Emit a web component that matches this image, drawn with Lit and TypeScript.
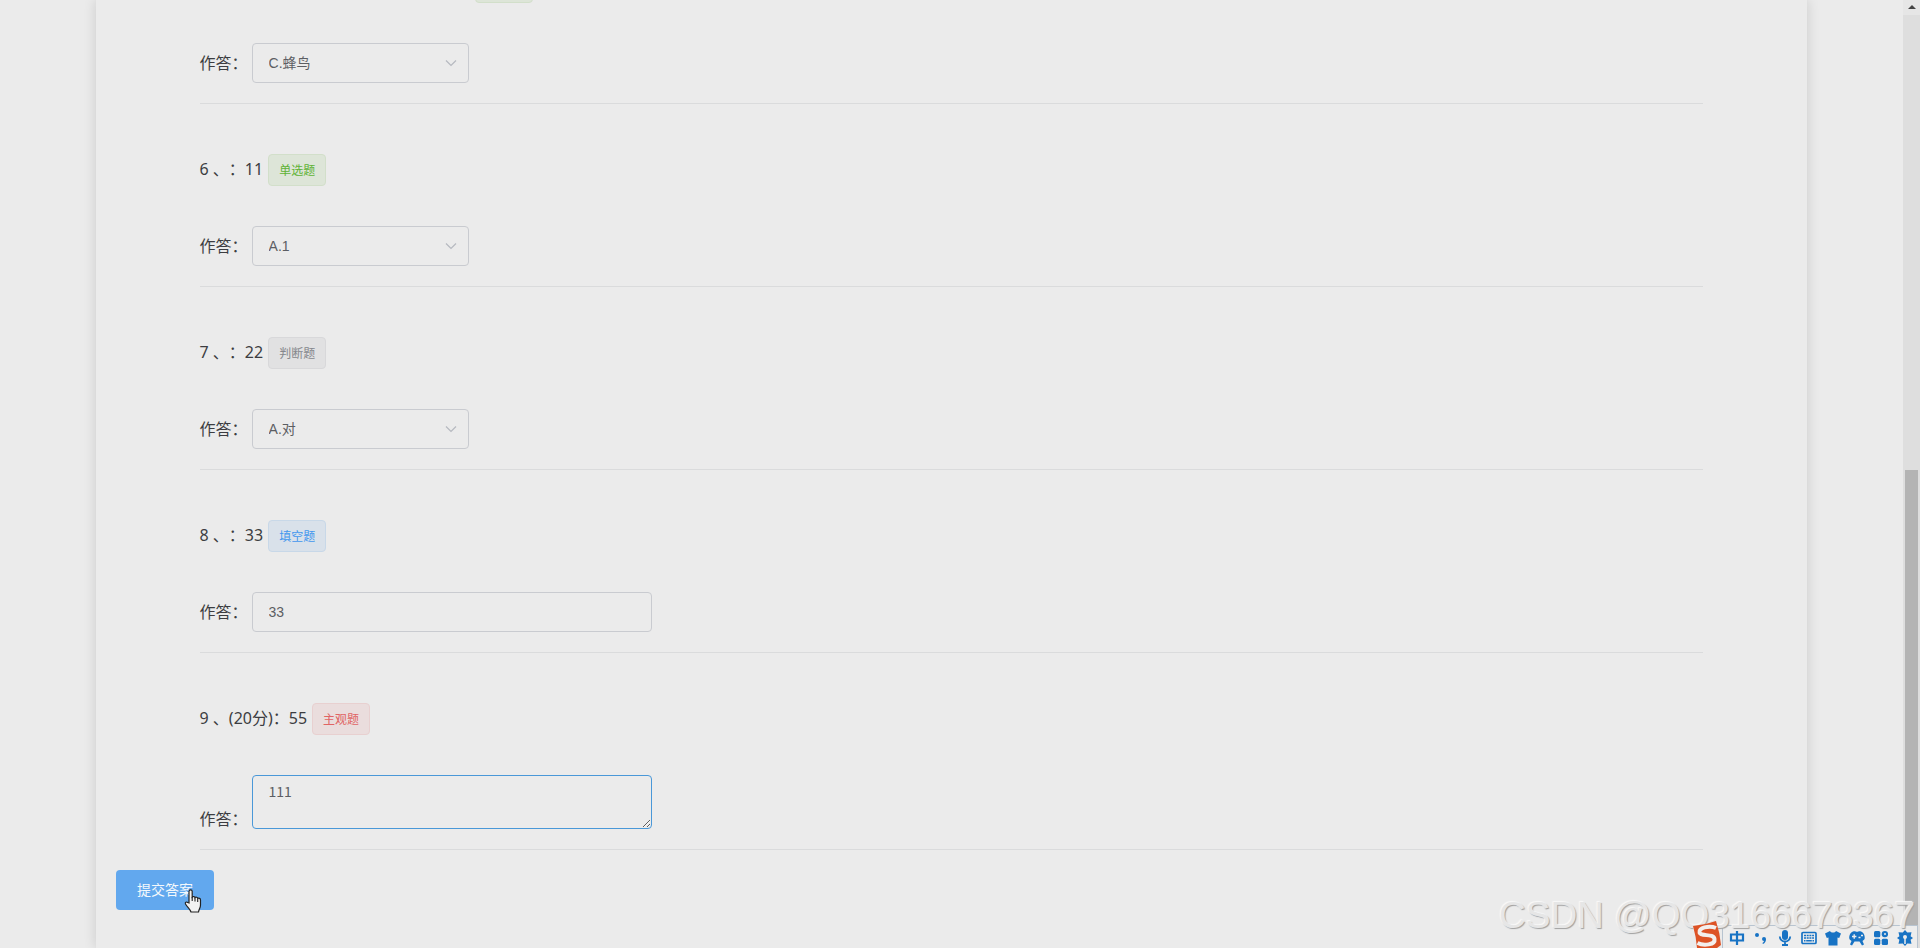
import { LitElement, html, css, svg } from "lit";
import { customElement } from "lit/decorators.js";

type Kind = "select" | "input" | "textarea";
interface Question {
  id: number;
  title: string;
  tag: string;
  tone: string;
  kind: Kind;
  value: string;
}

const questions: Question[] = [
  { id: 5, title: "", tag: "", tone: "success", kind: "select", value: "C.蜂鸟" },
  { id: 6, title: "6 、：11", tag: "单选题", tone: "success", kind: "select", value: "A.1" },
  { id: 7, title: "7 、：22", tag: "判断题", tone: "info", kind: "select", value: "A.对" },
  { id: 8, title: "8 、：33", tag: "填空题", tone: "primary", kind: "input", value: "33" },
  { id: 9, title: "9 、(20分)：55", tag: "主观题", tone: "danger", kind: "textarea", value: "111" },
];

const imeIcons = [
  svg`<path d="M2 4.500h12v6H2zM8 1v14" fill="none" stroke="currentColor" stroke-width="2.200"/>`,
  svg`<circle cx="4" cy="5" r="2"/><path d="M9 9a2 2 0 1 1 4 0c0 2.500-1 4-3 5l-.6-1c1-.6 1.500-1.200 1.600-2a2 2 0 0 1-2-2z"/>`,
  svg`<rect x="5" y="0" width="6" height="10" rx="3"/><path d="M2.800 6.500a5.200 5 0 0 0 10.400 0M8 12v3M5 15h6" fill="none" stroke="currentColor" stroke-width="1.800"/>`,
  svg`<rect x="1" y="2.500" width="14" height="11" rx="1" fill="none" stroke="currentColor" stroke-width="1.700"/><path d="M3 5.500h10M3 8h10" stroke="currentColor" stroke-width="1.500" stroke-dasharray="2 .7"/><path d="M3 10.800h1.500M5.200 10.800h5.600M11.500 10.800H13" stroke="currentColor" stroke-width="1.500"/>`,
  svg`<path d="M5 1c1 2 5 2 6 0l5 2.500-1.800 4.500-1.700-.6V15.500h-9V7.400L1.800 8 0 3.500z"/>`,
  svg`<path d="M4 1.500c2-.8 2.500.3 4 .3s2-1.100 4-.3c3 1 4 4.500 3.700 7-.4 1.500-1.500 1.800-2.200 2.500l1.500 3.500-2 1-2.500-4h-5L3 15.500l-2-1L2.500 11C1.800 10.300.7 10 .3 8.500 0 6 1 2.500 4 1.500z"/><path d="M3 6.500h4.400M5.200 4.300v4.400M9.500 7.500h2M12 5.500h2" stroke="#ededed" stroke-width="1.400"/>`,
  svg`<rect x="1" y="1" width="6.300" height="6.300" rx="1.500"/><rect x="8.700" y="1" width="6.300" height="6.300" rx="3"/><rect x="1" y="8.700" width="6.300" height="6.300" rx="1.500"/><rect x="8.700" y="8.700" width="6.300" height="6.300" rx="1.500"/><circle cx="12" cy="4" r="1" fill="#ededed"/>`,
  svg`<path d="M8 0l2.300 2.500 4.200-.2-.9 3.900L16 8l-2.400 1.800.9 3.900-4.200-.2L8 16l-2.300-2.500-4.200.2.900-3.900L0 8l2.400-1.800-.9-3.900 4.200.2z"/><circle cx="8" cy="7" r="2" fill="#ededed"/><path d="M8 8v6" stroke="#ededed" stroke-width="1.500"/>`,
];

@customElement("app-root")
export class AppRoot extends LitElement {
  static styles = css`
    :host {
      display: block;
      position: relative;
      height: 100vh;
      overflow: hidden;
      color: #3c3d41;
      background: #ebebeb;
      font: 16px/24px "Noto Sans", "Noto Sans CJK SC", sans-serif;
      text-spacing-trim: space-all;
    }
    * { box-sizing: border-box; }
    .frame { display: flex; height: 100%; }
    .page { flex: 1; min-width: 0; padding: 0 96px; }
    .panel {
      height: 100%;
      display: flex;
      flex-direction: column;
      justify-content: flex-end;
      padding: 0 20px 38px;
      box-shadow: 0 0 12px rgba(0, 0, 0, 0.14);
    }
    .list { padding: 0 5%; }
    .question { padding-bottom: 20px; border-bottom: 1px solid #dadbdc; margin-bottom: 50px; }
    .question:last-child { margin-bottom: 20px; }
    .head { display: flex; gap: 5px; height: 32px; margin-bottom: 40px; }
    .head h3 { margin: 0; font-size: 16px; font-weight: 400; line-height: 30px; white-space: pre; }
    .blank { width: 270px; }
    .tag { min-width: 58px; height: 32px; padding: 0 10px; border: 1px solid; border-radius: 4px; font-size: 12px; line-height: 32px; }
    .success { color: #5fb336; background: #dde5d8; border-color: #d2dfca; }
    .info { color: #85878c; background: #e1e1e2; border-color: #d8d8da; }
    .primary { color: #4297ee; background: #d9e1ea; border-color: #c8d8e8; }
    .danger { color: #e06464; background: #eadddd; border-color: #e8d0d0; }
    .answer { display: flex; align-items: center; gap: 4px; }
    .tall { align-items: flex-end; }
    .answer label { width: 48px; white-space: nowrap; }
    .tall label { line-height: 20px; }
    .field {
      display: block;
      width: 400px;
      height: 40px;
      margin: 0;
      padding: 0 16px;
      border: 1px solid #c9cbd0;
      border-radius: 4px;
      outline: none;
      background: transparent;
      color: #5c5e63;
      font: 14px/20px "Liberation Sans", "Noto Sans CJK SC", sans-serif;
    }
    .drop { display: grid; align-items: center; }
    .drop > * { grid-area: 1 / 1; }
    .drop .field { width: 217px; appearance: none; }
    .drop svg { justify-self: end; margin-right: 12px; width: 12px; height: 12px; pointer-events: none; }
    .area {
      height: 54px;
      padding: 5px 16px;
      border-color: #4a98d8;
      resize: vertical;
      font-family: "Noto Sans CJK SC", sans-serif;
    }
    .submit {
      align-self: flex-start;
      height: 40px;
      padding: 0 21px;
      border: 0;
      border-radius: 4px;
      background: #62a8ee;
      color: #f4f8fc;
      font: 14px/40px "Noto Sans", "Noto Sans CJK SC", sans-serif;
    }
    .scroll { width: 17px; background: #dedede; display: flex; flex-direction: column; align-items: center; }
    .up { width: 17px; height: 15px; background: #e6e6e6; display: block; }
    .thumb { width: 13px; flex: 1; margin-top: calc(50vh - 19px); background: #b4b4b4; }
    .pointer { position: absolute; left: 184px; bottom: 35px; width: 18px; height: 24px; }
    .watermark {
      position: absolute;
      right: 5px;
      bottom: 12px;
      color: #e6e6e6;
      font: 37px/40px "Liberation Sans", sans-serif;
      text-shadow: -1px -1px 1px #f9f9f9, 1px 1px 1px #a0a0a0;
      white-space: nowrap;
    }
    .ime {
      position: absolute;
      right: 2px;
      bottom: 0;
      display: flex;
      align-items: center;
      gap: 8px;
      width: 218px;
      height: 23px;
      padding: 3px 5px 0 29px;
      color: #1873c4;
    }
    .imebg { position: absolute; right: 2px; bottom: 0; width: 196px; height: 23px; background: #ededed; border: 1px solid #b8c4d0; border-bottom: 0; }
    .ime svg { flex: none; width: 16px; height: 16px; fill: currentColor; }
    .sogou { position: absolute; right: 197px; bottom: 0; width: 32px; height: 28px; }
  `;

  private control(q: Question) {
    const id = `answer-${q.id}`;
    if (q.kind === "input") return html`<input class="field" id=${id} .value=${q.value} />`;
    if (q.kind === "textarea") return html`<textarea class="field area" id=${id} .value=${q.value}></textarea>`;
    return html`<div class="drop">
      <select class="field" id=${id}><option>${q.value}</option></select>
      <svg viewBox="0 0 12 12"><path d="M1 3.500l5 5 5-5" fill="none" stroke="#b6b9c0" stroke-width="1.200" /></svg>
    </div>`;
  }

  render() {
    return html`
      <div class="frame">
        <main class="page">
          <form class="panel" @submit=${(e: Event) => e.preventDefault()}>
            <div class="list">
              ${questions.map(
                (q) => html`<section class="question">
                  <div class="head">
                    ${q.title ? html`<h3>${q.title}</h3>` : html`<span class="blank"></span>`}
                    <span class="tag ${q.tone}">${q.tag}</span>
                  </div>
                  <div class="answer ${q.kind === "textarea" ? "tall" : ""}">
                    <label for="answer-${q.id}">作答：</label>${this.control(q)}
                  </div>
                </section>`
              )}
            </div>
            <button class="submit">提交答案</button>
          </form>
        </main>
        <div class="scroll">
          <svg class="up" viewBox="0 0 17 15"><path d="M5 9l4-4 4 4z" fill="#444" /></svg>
          <div class="thumb"></div>
        </div>
      </div>
      <svg class="pointer" viewBox="0 0 18 24">
        <path d="M5 14V2.500a1.600 1.600 0 0 1 3.200 0V8c.8-.8 2.600-.6 2.800.6.900-.7 2.500-.4 2.700.8 1.200-.5 2.800 0 2.800 1.600v5c0 3-1.500 4-2 7H7c-.6-2.500-3.500-4.500-5.500-8-.8-1.600 1-2.600 2.200-1.500z" fill="#f2f2f2" stroke="#222" stroke-width="1.200" />
        <path d="M8.200 8v4M11 9v3.500M13.700 10v3" stroke="#222" stroke-width="1.100" />
      </svg>
      <div class="imebg"></div>
      <div class="watermark">CSDN @QQ3166678367</div>
      <div class="ime">${imeIcons.map((i) => html`<svg viewBox="0 0 16 16">${i}</svg>`)}</div>
      <svg class="sogou" viewBox="0 0 32 28">
        <path d="M2 6q12-1 23-5 4 12 5 24l-4 3H6Q5 16 2 6z" fill="#dd5326" />
        <path d="M25 8C18 5 7 8 8.500 12.500s14 .5 15 6.500-11 7-17 4" fill="none" stroke="#f3efed" stroke-width="4" />
      </svg>
    `;
  }
}
